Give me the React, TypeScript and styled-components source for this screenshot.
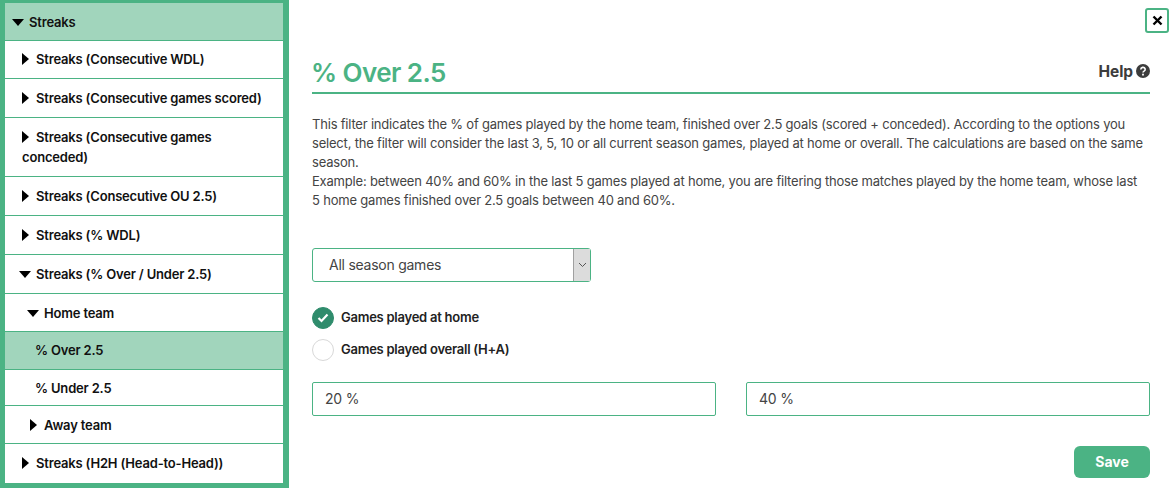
import styled, { createGlobalStyle } from 'styled-components';

const green = '#4bb384';
const FONT = '"Inter", "Liberation Sans", sans-serif';

const GlobalStyle = createGlobalStyle`
  html, body {
    margin: 0;
    padding: 0;
    background: #fff;
  }
  * {
    box-sizing: border-box;
  }
`;

const Page = styled.div`
  display: flex;
  width: 1172px;
  height: 488px;
  overflow: hidden;
  font-family: ${FONT};
  color: #3c3c3c;
`;

const Sidebar = styled.ul`
  width: 289px;
  height: 488px;
  flex-shrink: 0;
  margin: 0;
  padding: 0;
  list-style: none;
  background: #fff;
  border: solid ${green};
  border-width: 3px 6px 5px 5px;
`;

const Row = styled.li<{ $active?: boolean; $indent: number; $top: number; $bottom: number }>`
  padding: ${({ $top }) => $top}px 8px ${({ $bottom }) => $bottom}px ${({ $indent }) => $indent}px;
  font-size: 13px;
  font-weight: 600;
  line-height: 20px;
  letter-spacing: -0.18px;
  color: #111;
  background: ${({ $active }) => ($active ? '#a1d5bc' : '#fff')};
  border-bottom: 1px solid ${green};

  &:last-child {
    border-bottom: none;
  }
`;

const CaretIcon = styled.svg<{ $open?: boolean }>`
  display: inline-block;
  height: ${({ $open }) => ($open ? '7px' : '12px')};
  margin-top: -2px;
  vertical-align: middle;
  margin-right: ${({ $open }) => ($open ? '5px' : '7px')};
`;

const Main = styled.main`
  flex: 1;
  display: flex;
  flex-direction: column;
  padding: 8px 22px 0 23px;
`;

const CloseRow = styled.div`
  display: flex;
  justify-content: flex-end;
  margin-right: -19px;
`;

const CloseButton = styled.button`
  display: flex;
  align-items: center;
  justify-content: center;
  width: 24px;
  height: 25px;
  padding: 0;
  background: #fff;
  border: 2px solid ${green};
  border-radius: 3px;
`;

const TitleBar = styled.div`
  display: flex;
  justify-content: space-between;
  align-items: center;
  height: 36px;
  margin-top: 25px;
  border-bottom: 2px solid ${green};
`;

const Title = styled.h1`
  margin: -4px 0 0 -1px;
  font-size: 26px;
  font-weight: 600;
  line-height: 30px;
  letter-spacing: -0.55px;
  color: ${green};
`;

const Help = styled.div`
  display: flex;
  align-items: center;
  gap: 3px;
  margin-top: -8px;
  font-size: 15.5px;
  font-weight: 700;
  letter-spacing: -0.1px;
  color: #3c3c3c;
`;

const Description = styled.p`
  max-width: 832px;
  margin: 21px 0 0;
  font-size: 13px;
  line-height: 19px;
  letter-spacing: -0.2px;
  color: #444;
`;

const SelectBox = styled.div`
  display: flex;
  align-items: center;
  justify-content: space-between;
  width: 279px;
  height: 34px;
  margin-top: 38px;
  padding-left: 16px;
  font-size: 14px;
  letter-spacing: -0.25px;
  color: #444;
  border: 1px solid ${green};
  border-radius: 3px;
`;

const SelectLabel = styled.span`
  margin-top: -2px;
`;

const SelectArrow = styled.div`
  display: flex;
  align-items: center;
  justify-content: center;
  width: 17px;
  height: 32px;
  background: #dcdcdc;
  border-left: 1px solid #a0a0a0;
`;

const RadioGroup = styled.div`
  display: flex;
  flex-direction: column;
  gap: 10px;
  margin-top: 25px;
`;

const RadioRow = styled.label`
  display: flex;
  align-items: flex-start;
  gap: 7px;
  height: 22px;
  font-size: 13px;
  font-weight: 600;
  line-height: 20px;
  letter-spacing: -0.25px;
  color: #222;
`;

const RadioCircle = styled.span<{ $checked?: boolean }>`
  display: flex;
  align-items: center;
  justify-content: center;
  width: 22px;
  height: 22px;
  border-radius: 50%;
  background: ${({ $checked }) => ($checked ? '#2f8c6c' : '#fff')};
  border: 1px solid ${({ $checked }) => ($checked ? '#2f8c6c' : '#d8d8d8')};
`;

const Inputs = styled.div`
  display: grid;
  grid-template-columns: 404px 404px;
  justify-content: space-between;
  margin-top: 21px;
`;

const Field = styled.div`
  display: flex;
  align-items: center;
  height: 34px;
  padding: 0 0 1px 12px;
  font-size: 14px;
  letter-spacing: -0.2px;
  color: #444;
  border: 1px solid ${green};
  border-radius: 2px;
`;

const Footer = styled.div`
  display: flex;
  justify-content: flex-end;
  margin-top: 30px;
`;

const SaveButton = styled.button`
  width: 76px;
  height: 32px;
  padding: 0 0 2px;
  font-family: ${FONT};
  font-size: 14px;
  font-weight: 700;
  color: #fff;
  background: ${green};
  border: none;
  border-radius: 6px;
`;

const CaretRight = () => (
  <CaretIcon width='7' height='12' viewBox='0 0 7 12'>
    <path d='M0 0l7 6-7 6z' fill='#000' />
  </CaretIcon>
);

const CaretDown = () => (
  <CaretIcon $open width='12' height='7' viewBox='0 0 12 7'>
    <path d='M0 0h12L6 7z' fill='#000' />
  </CaretIcon>
);

const menu = [
  { label: 'Streaks', open: true, active: true, indent: 7, top: 9, bottom: 8 },
  { label: 'Streaks (Consecutive WDL)', indent: 17, top: 8, bottom: 9 },
  { label: 'Streaks (Consecutive games scored)', indent: 17, top: 9, bottom: 9 },
  { label: 'Streaks (Consecutive games conceded)', indent: 17, top: 9, bottom: 9 },
  { label: 'Streaks (Consecutive OU 2.5)', indent: 17, top: 9, bottom: 9 },
  { label: 'Streaks (% WDL)', indent: 17, top: 9, bottom: 9 },
  { label: 'Streaks (% Over / Under 2.5)', open: true, indent: 14, top: 9, bottom: 9 },
  { label: 'Home team', open: true, indent: 22, top: 9, bottom: 8 },
  { label: '% Over 2.5', active: true, noIcon: true, indent: 30, top: 8, bottom: 9 },
  { label: '% Under 2.5', noIcon: true, indent: 30, top: 8, bottom: 7 },
  { label: 'Away team', indent: 25, top: 9, bottom: 8 },
  { label: 'Streaks (H2H (Head-to-Head))', indent: 17, top: 9, bottom: 9 },
];

export default function App(): JSX.Element {
  return (
    <Page>
      <GlobalStyle />
      <Sidebar>
        {menu.map(item => (
          <Row
            key={item.label}
            $active={item.active}
            $indent={item.indent}
            $top={item.top}
            $bottom={item.bottom}
          >
            {!item.noIcon && (item.open ? <CaretDown /> : <CaretRight />)}
            {item.label}
          </Row>
        ))}
      </Sidebar>
      <Main>
        <CloseRow>
          <CloseButton aria-label='Close'>
            <svg width='11' height='11' viewBox='0 0 11 11'>
              <path d='M1.5 1.5l8 8M9.5 1.5l-8 8' stroke='#000' strokeWidth='2.4' />
            </svg>
          </CloseButton>
        </CloseRow>
        <TitleBar>
          <Title>% Over 2.5</Title>
          <Help>
            Help
            <svg width='14' height='14' viewBox='0 0 14 14'>
              <circle cx='7' cy='7' r='7' fill='#3c3c3c' />
              <path d='M4.8 5.4a2.2 2 0 1 1 3.3 1.7c-.7.4-1.1.7-1.1 1.4' fill='none' stroke='#fff' strokeWidth='1.6' />
              <rect x='6.1' y='9.7' width='1.8' height='1.8' fill='#fff' />
            </svg>
          </Help>
        </TitleBar>
        <Description>
          This filter indicates the % of games played by the home team, finished over 2.5 goals (scored + conceded). According to the options you select, the filter will consider the last 3, 5, 10 or all current season games, played at home or overall. The calculations are based on the same season.
          <br />
          Example: between 40% and 60% in the last 5 games played at home, you are filtering those matches played by the home team, whose last 5 home games finished over 2.5 goals between 40 and 60%.
        </Description>
        <SelectBox>
          <SelectLabel>All season games</SelectLabel>
          <SelectArrow>
            <svg width='9' height='6' viewBox='0 0 9 6'>
              <path d='M1 1l3.5 3.5L8 1' fill='none' stroke='#555' strokeWidth='1' />
            </svg>
          </SelectArrow>
        </SelectBox>
        <RadioGroup>
          <RadioRow>
            <RadioCircle $checked>
              <svg width='12' height='10' viewBox='0 0 12 10'>
                <path d='M1.5 5l3 3 6-6.5' fill='none' stroke='#fff' strokeWidth='2.2' />
              </svg>
            </RadioCircle>
            Games played at home
          </RadioRow>
          <RadioRow>
            <RadioCircle />
            Games played overall (H+A)
          </RadioRow>
        </RadioGroup>
        <Inputs>
          <Field>20 %</Field>
          <Field>40 %</Field>
        </Inputs>
        <Footer>
          <SaveButton>Save</SaveButton>
        </Footer>
      </Main>
    </Page>
  );
}
